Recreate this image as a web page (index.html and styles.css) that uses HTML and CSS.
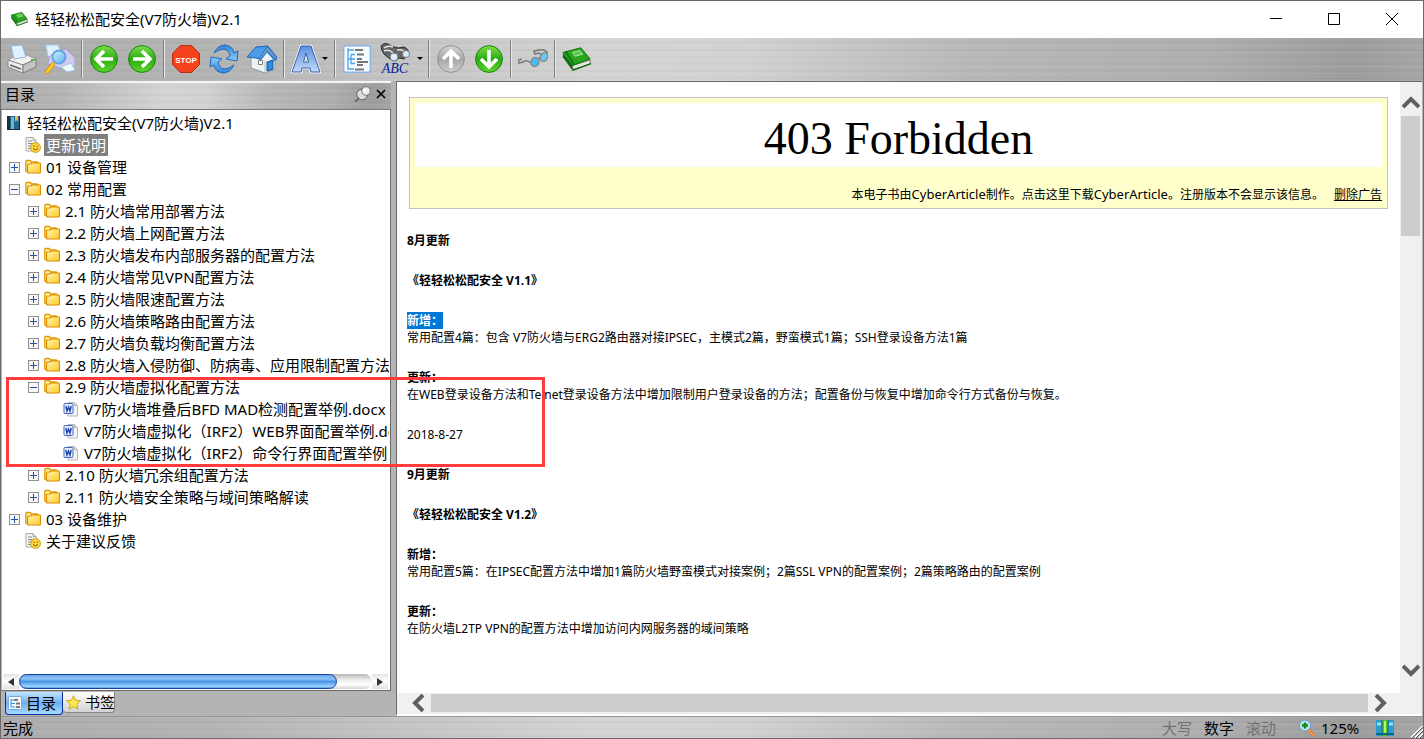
FILE: index.html
```html
<!DOCTYPE html>
<html lang="zh-CN">
<head>
    <meta charset="UTF-8">
    <meta name="viewport" content="width=device-width, initial-scale=1.0">
    <title>轻轻松松配安全(V7防火墙)V2.1</title>
    <link rel="stylesheet" href="styles.css">
</head>
<body>
    <!-- Shared icons -->
    <svg class="defs" aria-hidden="true">
        <defs>
            <linearGradient id="gGreen" x1="0" y1="0" x2="0" y2="1"><stop offset="0" stop-color="#7ddf4c"/><stop offset=".5" stop-color="#2bab12"/><stop offset="1" stop-color="#5fd52c"/></linearGradient>
            <linearGradient id="gGray" x1="0" y1="0" x2="0" y2="1"><stop offset="0" stop-color="#d6d6d6"/><stop offset=".5" stop-color="#a6a6a6"/><stop offset="1" stop-color="#cfcfcf"/></linearGradient>
            <linearGradient id="gBlue" x1="0" y1="0" x2="0" y2="1"><stop offset="0" stop-color="#2f86d8"/><stop offset="1" stop-color="#8ecbfa"/></linearGradient>
            <linearGradient id="gLens" x1="0" y1="0" x2="1" y2="1"><stop offset="0" stop-color="#d8f3ff"/><stop offset="1" stop-color="#4db3ee"/></linearGradient>
            <linearGradient id="gLetter" x1="0" y1="0" x2="0" y2="1"><stop offset="0" stop-color="#5c8fe0"/><stop offset="1" stop-color="#c3daf8"/></linearGradient>
            <linearGradient id="gFolder" x1="0" y1="0" x2="1" y2="1"><stop offset="0" stop-color="#fff6b0"/><stop offset="1" stop-color="#ffc928"/></linearGradient>
        </defs>
        <symbol id="book" viewBox="0 0 32 32">
            <path d="M1 10v4l10 14 3-2z" fill="#0b6b0b"/>
            <path d="M11 23l19-6v4l-18 7z" fill="#e8e8e8" stroke="#777" stroke-width="1"/>
            <path d="M11 28l20-7" stroke="#0b6b0b" stroke-width="1.5"/>
            <path d="M1 9L20 4l10 12-19 7z" fill="#26a51d" stroke="#0c720c" stroke-width="1"/>
            <path d="M4 8l9 14" stroke="#0c720c" stroke-width="1.5"/>
            <path d="M11 9l8-2 3 4-8 2z" fill="#59c64d" stroke="#b2ebaa" stroke-width="1"/>
        </symbol>
        <symbol id="folder" viewBox="0 0 16 16">
            <path d="M.8 12.5V2.5q0-1 1-1h3.5l1.2 1.5H12q1 0 1 1V5" fill="#fff3b4" stroke="#e09a00" stroke-width="1.3"/>
            <path d="M3 5h3l1-1h7.5q1 0 1 1v8q0 1-1 1h-11q-1 0-1-1V6z" fill="url(#gFolder)" stroke="#d98e00" stroke-width="1.2"/>
            <path d="M1 12l2 2" stroke="#d98e00"/>
        </symbol>
        <symbol id="note" viewBox="0 0 16 16">
            <path d="M1 .5h7l3 3V14H1z" fill="#f4f4f4" stroke="#aaa"/>
            <path d="M8 .5v3h3" fill="#ddd" stroke="#aaa"/>
            <path d="M3 4h4M3 6.5h5M3 9h3M3 11.5h3" stroke="#8d8d8d"/>
            <circle cx="10.5" cy="10.5" r="4.9" fill="#ffd840" stroke="#c39a20"/>
            <circle cx="9" cy="9.300" r=".7" fill="#7a5200"/><circle cx="12.2" cy="9.300" r=".7" fill="#7a5200"/>
            <path d="M8 11.5q2.500 2.800 5 0" fill="none" stroke="#7a5200"/>
        </symbol>
        <symbol id="word" viewBox="0 0 16 16">
            <path d="M5 1.500h6.500l3 3V15H5z" fill="#f4f4f4" stroke="#b8b8b8"/>
            <path d="M11.500 1.500v3h3" fill="#ddd" stroke="#b8b8b8"/>
            <rect x="1" y="2.500" width="9" height="10" rx="1" fill="#e8f0ff" stroke="#4368c0"/>
            <path d="M2.800 5l1.200 5 1.500-4 1.500 4L8.200 5" fill="none" stroke="#2144a8" stroke-width="1.400"/>
        </symbol>
        <symbol id="tree" viewBox="0 0 28 28">
            <rect x=".7" y=".7" width="26.600" height="26.600" rx="2" fill="#f6fbff" stroke="#87b3e6" stroke-width="1.400"/>
            <path d="M5 3v21h6M5 5h6M5 14h3M8 9.500h4M8 9.500v9h4M8 14h4" fill="none" stroke="#49a4e8" stroke-width="1.300"/>
            <path d="M12 5h8M14 9.500h7M14 14h5M14 17h11M14 20h6M12 24.500h9" stroke="#777" stroke-width="1.800"/>
        </symbol>
        <symbol id="outline" viewBox="0 0 14 14">
            <rect x=".5" y=".5" width="13" height="13" rx="1" fill="#f6fbff" stroke="#7aa6dc"/>
            <path d="M3 3v8h4M3 4h3M3 7.500h4" fill="none" stroke="#2f8fe0"/>
            <path d="M6 4h4M8 7.500h4M8 11h4" stroke="#777" stroke-width="2"/>
        </symbol>
    </svg>

    <div class="window">
        <header class="titlebar">
            <svg class="app-icon"><use href="#book"/></svg>
            <h1>轻轻松松配安全(V7防火墙)V2.1</h1>
            <div class="window-buttons">
                <button type="button" aria-label="最小化"><svg viewBox="0 0 12 12"><path d="M0 5.500h12"/></svg></button>
                <button type="button" aria-label="最大化"><svg viewBox="0 0 12 12"><path d="M.5.500h11v11H.5z"/></svg></button>
                <button type="button" aria-label="关闭"><svg viewBox="0 0 12 12"><path d="M0 0l12 12M12 0L0 12"/></svg></button>
            </div>
        </header>

        <nav class="toolbar metal">
            <button type="button" aria-label="打印">
                <svg viewBox="0 0 30 30">
                    <path d="M1 16l7-4 12-1 9 4-13 6z" fill="#f2f2f2" stroke="#999"/>
                    <path d="M4 2l11-1 4 12-12 2z" fill="#e0f1ff" stroke="#8fb8dc"/>
                    <path d="M1 16l15 5v8L1 23z" fill="#ededed" stroke="#8a8a8a"/>
                    <path d="M16 21l13-6v8l-13 6z" fill="#c4c4c4" stroke="#7d7d7d"/>
                    <path d="M3 21l11 4" stroke="#666" stroke-width="1.500"/>
                    <circle cx="25" cy="16" r="1.300" fill="#36c336"/>
                </svg>
            </button>
            <button type="button" aria-label="打印预览">
                <svg viewBox="0 0 30 30">
                    <path d="M1 1h12l4 9-14 3z" fill="#dff0ff" stroke="#a3cdec"/>
                    <path d="M12 7l9-2 9 9v8l-12 3-15-5 1-7z" fill="#cfcdf0" stroke="#9f9dd0"/>
                    <path d="M16 23l10-4 4 7-8 2z" fill="#f2faff" stroke="#9bc8ec"/>
                    <path d="M8 20l-6 8" stroke="#bf7b00" stroke-width="4" stroke-linecap="round"/>
                    <path d="M8 20l-6 8" stroke="#ffc61c" stroke-width="3" stroke-linecap="round"/>
                    <circle cx="14" cy="13" r="6.500" fill="url(#gLens)" stroke="#6ba2e4" stroke-width="2"/>
                </svg>
            </button>
            <span class="sep"></span>
            <button type="button" aria-label="后退">
                <svg viewBox="-1 -1 30 30"><circle cx="14" cy="14" r="13.400" fill="url(#gGreen)" stroke="#188609"/><path d="M14 6l-8 8 8 8M7 14h16" fill="none" stroke="#fff" stroke-width="3.600"/></svg>
            </button>
            <button type="button" aria-label="前进">
                <svg viewBox="-1 -1 30 30"><circle cx="14" cy="14" r="13.400" fill="url(#gGreen)" stroke="#188609"/><path d="M14 6l8 8-8 8M21 14H5" fill="none" stroke="#fff" stroke-width="3.600"/></svg>
            </button>
            <span class="sep"></span>
            <button type="button" aria-label="停止">
                <svg viewBox="-1 -1 30 30"><path d="M8.500.5h11l8 8v11l-8 8h-11l-8-8v-11z" fill="#f4421c" stroke="#b92c10"/><text x="14" y="18" class="stop-text">STOP</text></svg>
            </button>
            <button type="button" aria-label="刷新">
                <svg viewBox="0 0 30 30">
                    <path id="arc" d="M5 9Q9 1 16 1q8 1 9 8l4-2-1 10-11-2 4-3q-1-6-6-7-5 0-10 4z" fill="url(#gBlue)" stroke="#1b67b7"/>
                    <use href="#arc" transform="rotate(180 15 15)"/>
                </svg>
            </button>
            <button type="button" aria-label="主页">
                <svg viewBox="0 0 30 30">
                    <path d="M4 14l16-9 8 10v10l-10 4-14-5z" fill="#eef1f6" stroke="#8b95a5"/>
                    <path d="M18 17v12" stroke="#b5bdc9"/>
                    <path d="M0 13L9 3l12-1-9 13-3-1z" fill="#4b9de9" stroke="#1d63ae"/>
                    <path d="M20 2l10 12-2 2-8-9-7 9" fill="none" stroke="#2f7fcd" stroke-width="2"/>
                    <path d="M20 18l6-2v9l-6 2z" fill="#2e8ce0" stroke="#145596"/>
                    <path d="M11.500 16.500h4v4h-4z" fill="#fff" stroke="#777"/>
                </svg>
            </button>
            <span class="sep"></span>
            <button type="button" class="with-caret" aria-label="字体">
                <svg viewBox="0 0 30 30"><path d="M1 28L10 2h10l9 26h-9l-1-4h-8l-1 4zM12.500 18h5L15 9z" fill="#fff" stroke="#fff" stroke-width="2.500" fill-rule="evenodd"/><path d="M1 28L10 2h10l9 26h-9l-1-4h-8l-1 4zM12.500 18h5L15 9z" fill="url(#gLetter)" stroke="#335fac" fill-rule="evenodd"/></svg>
                <span class="caret"></span>
            </button>
            <span class="sep"></span>
            <button type="button" aria-label="同步目录"><svg viewBox="-1 -1 30 30"><use href="#tree" width="28" height="28"/></svg></button>
            <button type="button" class="with-caret wide" aria-label="查找">
                <svg viewBox="0 0 32 32">
                    <path d="M1 3q3-4 7-2l3 2 7 2 6-1q4 1 5 7l-5 5-5-1-4 3-5-2-6-5q-3-4-3-8z" fill="#666" stroke="#2a2a2a"/>
                    <path d="M4 5q4-3 9-1M4 8q5-2 9 2M17 7q6-1 9 3" fill="none" stroke="#e6e6e6" stroke-width="1.500"/>
                    <circle cx="14" cy="14" r="4" fill="#d5efff" stroke="#777"/><circle cx="26" cy="11" r="3.500" fill="#d5efff" stroke="#777"/>
                    <text x="15" y="30" class="abc-text">ABC</text>
                </svg>
                <span class="caret"></span>
            </button>
            <span class="sep"></span>
            <button type="button" aria-label="上一篇">
                <svg viewBox="-1 -1 30 30"><circle cx="14" cy="14" r="13.400" fill="url(#gGray)" stroke="#929292"/><path d="M6 14l8-8 8 8M14 7v16" fill="none" stroke="#fff" stroke-width="3.600"/></svg>
            </button>
            <button type="button" aria-label="下一篇">
                <svg viewBox="-1 -1 30 30"><circle cx="14" cy="14" r="13.400" fill="url(#gGreen)" stroke="#188609"/><path d="M6 14l8 8 8-8M14 21V5" fill="none" stroke="#fff" stroke-width="3.600"/></svg>
            </button>
            <span class="sep"></span>
            <button type="button" aria-label="阅读模式">
                <svg viewBox="0 0 30 30"><path d="M13 19q-4-4-8-1l-4 1-1-3 4-1M29 11V8q-3-3-8-2l-5 1 1 3 4-1 3 2M19 17q2-4 4-3" fill="none" stroke="#777" stroke-width="1.600"/><ellipse cx="17" cy="18" rx="4" ry="4.500" fill="#48bdf5" stroke="#888" stroke-width="1.500" transform="rotate(25 17 18)"/><ellipse cx="26" cy="13" rx="3.500" ry="4.500" fill="#63cbf8" stroke="#888" stroke-width="1.500" transform="rotate(25 26 13)"/></svg>
            </button>
            <span class="sep"></span>
            <button type="button" aria-label="电子书"><svg><use href="#book"/></svg></button>
        </nav>

        <div class="main">
            <aside class="sidebar">
                <div class="panel-head metal">
                    <h2>目录</h2>
                    <button type="button" aria-label="固定"><svg viewBox="0 0 16 16"><path d="M0 16l5-5" stroke="#555" stroke-width="1.500"/><ellipse cx="7" cy="8.500" rx="5" ry="5.500" fill="#ddd" stroke="#666" transform="rotate(-40 7 8.500)"/><circle cx="11" cy="5" r="4.300" fill="#eee" stroke="#777"/><circle cx="10" cy="4" r="1.500" fill="#fff"/></svg></button>
                    <button type="button" aria-label="关闭面板"><svg viewBox="0 0 16 16"><path d="M4 4l8 8M12 4l-8 8" stroke="#000" stroke-width="1.700"/></svg></button>
                </div>
                <div class="tree-box">
                    <div class="tree">
                        <div class="row root">
                            <svg viewBox="0 0 16 16"><path d="M1 1h13v14H1z" fill="#1d3038"/><path d="M4 1h9v13H4z" fill="#23688c"/><path d="M5 2h3v12H5z" fill="#6eb6cf"/><path d="M9 1h3v6l-1.500-2L9 7z" fill="#efb94a"/></svg>
                            <a href="#">轻轻松松配安全(V7防火墙)V2.1</a>
                        </div>
                        <ul>
                            <li><div class="row leaf"><svg><use href="#note"/></svg><a href="#" class="selected">更新说明</a></div></li>
                            <li><div class="row"><button type="button" class="toggle plus" aria-label="展开"></button><svg><use href="#folder"/></svg><a href="#">01 设备管理</a></div></li>
                            <li><div class="row"><button type="button" class="toggle" aria-label="收起"></button><svg><use href="#folder"/></svg><a href="#">02 常用配置</a></div>
                                <ul>
                                    <li><div class="row"><button type="button" class="toggle plus" aria-label="展开"></button><svg><use href="#folder"/></svg><a href="#">2.1 防火墙常用部署方法</a></div></li>
                                    <li><div class="row"><button type="button" class="toggle plus" aria-label="展开"></button><svg><use href="#folder"/></svg><a href="#">2.2 防火墙上网配置方法</a></div></li>
                                    <li><div class="row"><button type="button" class="toggle plus" aria-label="展开"></button><svg><use href="#folder"/></svg><a href="#">2.3 防火墙发布内部服务器的配置方法</a></div></li>
                                    <li><div class="row"><button type="button" class="toggle plus" aria-label="展开"></button><svg><use href="#folder"/></svg><a href="#">2.4 防火墙常见VPN配置方法</a></div></li>
                                    <li><div class="row"><button type="button" class="toggle plus" aria-label="展开"></button><svg><use href="#folder"/></svg><a href="#">2.5 防火墙限速配置方法</a></div></li>
                                    <li><div class="row"><button type="button" class="toggle plus" aria-label="展开"></button><svg><use href="#folder"/></svg><a href="#">2.6 防火墙策略路由配置方法</a></div></li>
                                    <li><div class="row"><button type="button" class="toggle plus" aria-label="展开"></button><svg><use href="#folder"/></svg><a href="#">2.7 防火墙负载均衡配置方法</a></div></li>
                                    <li><div class="row"><button type="button" class="toggle plus" aria-label="展开"></button><svg><use href="#folder"/></svg><a href="#">2.8 防火墙入侵防御、防病毒、应用限制配置方法</a></div></li>
                                    <li><div class="row"><button type="button" class="toggle" aria-label="收起"></button><svg><use href="#folder"/></svg><a href="#">2.9 防火墙虚拟化配置方法</a></div>
                                        <ul>
                                            <li><div class="row leaf"><svg><use href="#word"/></svg><a href="#">V7防火墙堆叠后BFD MAD检测配置举例.docx</a></div></li>
                                            <li><div class="row leaf"><svg><use href="#word"/></svg><a href="#">V7防火墙虚拟化（IRF2）WEB界面配置举例.docx</a></div></li>
                                            <li><div class="row leaf"><svg><use href="#word"/></svg><a href="#">V7防火墙虚拟化（IRF2）命令行界面配置举例</a></div></li>
                                        </ul>
                                    </li>
                                    <li><div class="row"><button type="button" class="toggle plus" aria-label="展开"></button><svg><use href="#folder"/></svg><a href="#">2.10 防火墙冗余组配置方法</a></div></li>
                                    <li><div class="row"><button type="button" class="toggle plus" aria-label="展开"></button><svg><use href="#folder"/></svg><a href="#">2.11 防火墙安全策略与域间策略解读</a></div></li>
                                </ul>
                            </li>
                            <li><div class="row"><button type="button" class="toggle plus" aria-label="展开"></button><svg><use href="#folder"/></svg><a href="#">03 设备维护</a></div></li>
                            <li><div class="row leaf"><svg><use href="#note"/></svg><a href="#">关于建议反馈</a></div></li>
                        </ul>
                    </div>
                    <div class="tree-scroll">
                        <button type="button" aria-label="向左"><svg viewBox="0 0 6 8"><path d="M6 0v8L0 4z"/></svg></button>
                        <div class="track"><div class="thumb"></div></div>
                        <button type="button" aria-label="向右"><svg viewBox="0 0 6 8"><path d="M0 0v8l6-4z"/></svg></button>
                    </div>
                </div>
                <div class="tabs">
                    <button type="button" class="tab active"><svg><use href="#outline"/></svg>目录</button>
                    <button type="button" class="tab"><svg viewBox="0 0 16 16"><path d="M8 .8l2.200 4.900 5.300.5-4 3.500 1.200 5.300L8 12.300 3.300 15l1.200-5.300-4-3.500 5.300-.5z" fill="#ffe84c" stroke="#c9a21a"/></svg><span>书签</span></button>
                </div>
            </aside>

            <section class="viewer">
                <div class="view-row">
                    <article class="page">
                        <div class="ad">
                            <div class="ad-frame">403 Forbidden</div>
                            <p>本电子书由<span>CyberArticle</span>制作。点击这里下载<span>CyberArticle</span>。注册版本不会显示该信息。<a href="#">删除广告</a></p>
                        </div>
                        <p><b>8月更新</b></p>
                        <p><b>《轻轻松松配安全 V1.1》</b></p>
                        <p><b><mark>新增：</mark></b><br>常用配置4篇：包含 V7防火墙与ERG2路由器对接IPSEC，主模式2篇，野蛮模式1篇；SSH登录设备方法1篇</p>
                        <p><b>更新：</b><br>在WEB登录设备方法和Telnet登录设备方法中增加限制用户登录设备的方法；配置备份与恢复中增加命令行方式备份与恢复。</p>
                        <p>2018-8-27</p>
                        <p><b>9月更新</b></p>
                        <p><b>《轻轻松松配安全 V1.2》</b></p>
                        <p><b>新增：</b><br>常用配置5篇：在IPSEC配置方法中增加1篇防火墙野蛮模式对接案例；2篇SSL VPN的配置案例；2篇策略路由的配置案例</p>
                        <p><b>更新：</b><br>在防火墙L2TP VPN的配置方法中增加访问内网服务器的域间策略</p>
                    </article>
                    <div class="vscroll">
                        <button type="button" aria-label="向上"><svg viewBox="0 0 18 14"><path d="M1 11l8-8 8 8"/></svg></button>
                        <div class="track"><div class="thumb"></div></div>
                        <button type="button" aria-label="向下"><svg viewBox="0 0 18 14"><path d="M1 3l8 8 8-8"/></svg></button>
                    </div>
                </div>
                <div class="hscroll">
                    <button type="button" aria-label="向左"><svg viewBox="0 0 14 18"><path d="M11 1L3 9l8 8"/></svg></button>
                    <div class="thumb"></div>
                    <button type="button" aria-label="向右"><svg viewBox="0 0 14 18"><path d="M3 1l8 8-8 8"/></svg></button>
                </div>
            </section>
        </div>

        <footer class="statusbar metal">
            <span class="message">完成</span>
            <span class="key off">大写</span>
            <span class="key">数字</span>
            <span class="key off">滚动</span>
            <button type="button" class="zoom"><svg viewBox="0 0 18 18"><path d="M10 10l6 7" stroke="#e8742a" stroke-width="3"/><path d="M10 10l6 7" stroke="#ffc08a"/><circle cx="7" cy="6.500" r="5.500" fill="#b9e5f8" stroke="#5f9cbc"/><path d="M7 3.500v6M4 6.500h6" stroke="#118a11" stroke-width="2.500"/></svg>125%</button>
            <button type="button" class="books" aria-label="书架"><svg viewBox="0 0 18 18"><path d="M0 1h6v16H0zM12 1h6v16h-6z" fill="#2b9bd2"/><path d="M6 1h6v16H6z" fill="#52c41e"/><path d="M1 5h4M13 5h4" stroke="#96e4f5" stroke-width="3"/><path d="M9 2v14" stroke="#b9f26b" stroke-width="2"/><path d="M6 1v16M12 1v16" stroke="#116488"/><path d="M0 15h18" stroke="#116488" stroke-width="2"/></svg></button>
            <svg class="grip" viewBox="0 0 12 12"><path d="M0 12L12 0M4 12l8-8M8 12l4-4" stroke="#fff" stroke-width="2"/><path d="M1 12L12 1M5 12l7-7M9 12l3-3" stroke="#555"/></svg>
        </footer>

        <div class="callout"></div>
    </div>
</body>
</html>
```
FILE: styles.css
```css
* { box-sizing: border-box; }
body { margin: 0; font-family: "Noto Sans", "Noto Sans CJK SC", sans-serif; font-size: 15px; color: #000; }
h1, h2, p, ul { margin: 0; padding: 0; font-weight: normal; }
ul { list-style: none; }
a { color: inherit; text-decoration: none; }
button { padding: 0; border: 0; background: none; font: inherit; color: inherit; cursor: pointer; }
svg { display: block; flex: none; }
.defs { position: absolute; width: 0; height: 0; }

.window { position: relative; display: flex; flex-direction: column; height: 100vh; border: 1px solid #696969; background: #b4b4b4; overflow: hidden; }

/* brushed metal bars */
.metal {
    background:
        repeating-linear-gradient(180deg, rgba(255,255,255,.07) 0, rgba(255,255,255,.07) 1px, transparent 1px, transparent 4px, rgba(0,0,0,.02) 4px, rgba(0,0,0,.02) 6px, transparent 6px, transparent 7px),
        linear-gradient(95deg, #adadad 0%, #b4b4b4 15%, #c4c4c4 28%, #d4d4d4 42%, #d2d2d2 52%, #b8b8b8 68%, #aeaeae 85%, #9d9d9d 95%, #a6a6a6 100%);
}

.titlebar { display: flex; align-items: center; height: 37px; padding: 0 2px 2px 9px; background: #fff; }
.titlebar h1 { flex: 1; margin-left: 6px; font-size: 15px; line-height: 22px; }
.app-icon { width: 19px; height: 18px; }
.window-buttons { display: flex; }
.window-buttons button { display: flex; align-items: center; justify-content: center; width: 58px; height: 34px; }
.window-buttons svg { width: 12px; height: 12px; fill: none; stroke: #000; }

.toolbar { display: flex; align-items: center; height: 43px; padding: 0 0 2px 2px; }
.toolbar button { display: flex; align-items: center; justify-content: center; width: 38px; height: 38px; }
.toolbar button svg { width: 30px; height: 30px; }
.toolbar .with-caret { width: 45px; gap: 1px; }
.toolbar .wide { width: 50px; gap: 5px; }
.toolbar .wide svg { width: 32px; height: 32px; }
.caret { border: 3px solid transparent; border-top-color: #000; border-bottom: 0; }
.sep { width: 2px; height: 38px; margin: 0 2px; background: #808080; border-right: 1px solid #e6e6e6; }
.stop-text { font: bold 8px "Liberation Sans", sans-serif; fill: #fff; text-anchor: middle; }
.abc-text { font: italic 14px "Liberation Serif", serif; fill: #001f9c; text-anchor: middle; }

.main { flex: 1; display: flex; gap: 5px; min-height: 0; }
.sidebar { display: flex; flex-direction: column; width: 390px; }
.panel-head { display: flex; align-items: center; height: 29px; padding: 0 0 4px 4px; border-top: 2px solid #f4f4f4; border-bottom: 1px solid #7b7b7b; background-size: auto, 100% 100%; }
.panel-head h2 { flex: 1; font-size: 15px; line-height: 22px; }
.panel-head button { width: 18px; }
.panel-head svg { width: 16px; height: 16px; }

.tree-box { flex: 1; display: flex; flex-direction: column; min-height: 0; margin-left: 1px; padding: 2px 1px 1px 0; border-right: 1px solid #696969; border-bottom: 1px solid #696969; background: #fff; }
.tree { flex: 1; overflow: hidden; }
.tree ul ul { padding-left: 19px; }
.row { display: flex; align-items: center; height: 22px; padding-left: 7px; white-space: nowrap; }
.row svg { width: 16px; height: 16px; margin-right: 3px; }
.row a { padding: 0 2px; line-height: 22px; }
.row.root { padding-left: 4px; }
.row.leaf { padding-left: 23px; }
.row .selected { background: #808080; color: #fff; }
.toggle { flex: none; width: 11px; height: 11px; margin-right: 5px; border: 1px solid #919191;
    background: linear-gradient(#2b4fa8, #2b4fa8) center / 7px 1px no-repeat, #f7f7f7; }
.toggle.plus { background: linear-gradient(#2b4fa8, #2b4fa8) center / 7px 1px no-repeat, linear-gradient(#2b4fa8, #2b4fa8) center / 1px 7px no-repeat, #f7f7f7; }

.tree-scroll { display: flex; height: 15px; padding: 0 1px; }
.tree-scroll button { display: flex; align-items: center; justify-content: center; width: 16px; background: linear-gradient(#e4e4e4, #fff 50%, #e0e0e0); }
.tree-scroll button svg { width: 6px; height: 8px; fill: #333; }
.tree-scroll .track { flex: 1; border-radius: 8px; background: linear-gradient(#b8b8b8, #eee 40%, #fff 70%, #d5d5d5); }
.tree-scroll .thumb { width: 90%; height: 15px; border: 1px solid #1741a0; border-radius: 8px; background: linear-gradient(#6ea9ec, #8fc2f5 30%, #4a94e8 50%, #9ed7ff 90%, #4b8fdc); }

.tabs { display: flex; align-items: flex-start; height: 25px; padding: 1px 0 0 4px; }
.tab { display: flex; align-items: center; width: 52px; height: 21px; padding-left: 3px; gap: 4px; border-radius: 0 0 4px 4px; background: linear-gradient(#fff, #d2d2d2); border-right: 1px solid #888; border-bottom: 1px solid #888; line-height: 20px; overflow: hidden; white-space: nowrap; }
.tab.active { width: 58px; height: 23px; padding-left: 2px; border: 1px solid #0b2f9f; border-top: 0; background: linear-gradient(#c4e4ff, #6fb0f3 50%, #a5dcff); }
.tab svg { width: 15px; height: 15px; }
.tab.active svg { width: 14px; height: 14px; }

.viewer { flex: 1; display: flex; flex-direction: column; min-width: 0; margin-right: 1px; border-top: 1px solid #696969; border-left: 1px solid #696969; border-bottom: 2px solid #fff; background: #fff; }
.view-row { flex: 1; display: flex; min-height: 0; }
.page { flex: 1; min-width: 0; padding: 15px 12px 0 10px; overflow: hidden; font-size: 12px; line-height: 17px; }
.page p { margin-bottom: 23px; }
.page mark { display: inline-block; background: #0078d7; color: #fff; }
.page .ad { height: 112px; margin: 0 0 23px 2px; padding: 5px; border: 1px solid #c3c3c3; background: #ffc; font-family: "Noto Sans CJK TC", sans-serif; }
.ad-frame { height: 64px; background: #fff; font: 46px/72px "Liberation Serif", serif; text-align: center; }
.page .ad p { margin-top: 18px; text-align: right; }
.ad p { font-family: "Noto Sans CJK TC", sans-serif; }
.ad span { font-family: "Noto Sans", sans-serif; font-size: 13px; }
.ad a { margin-left: 10px; text-decoration: underline; }

.vscroll, .hscroll { display: flex; background: #f0f0f0; }
.vscroll { flex-direction: column; width: 22px; padding: 10px 2px 10px 1px; }
.vscroll .track { flex: 1; }
.vscroll .thumb { height: 120px; background: #cdcdcd; }
.vscroll button, .hscroll button { display: flex; align-items: center; justify-content: center; }
.vscroll button { height: 24px; padding-bottom: 2px; }
.hscroll { height: 21px; padding: 1px 30px 2px 10px; }
.hscroll button { width: 24px; }
.hscroll .thumb { flex: 1; background: #cdcdcd; }
.vscroll svg { width: 18px; height: 14px; }
.hscroll svg { width: 14px; height: 18px; }
.vscroll path, .hscroll path { fill: none; stroke: #606060; stroke-width: 4; }

.statusbar { display: flex; align-items: center; height: 22px; padding-left: 2px; border-top: 1px solid #959595; line-height: 20px; }
.message { flex: 1; }
.key { width: 42px; }
.key.off { color: #707070; }
.zoom { display: flex; align-items: center; gap: 5px; width: 66px; margin-left: 10px; }
.zoom svg { width: 18px; height: 18px; }
.books { margin: 0 17px 0 12px; }
.books svg { width: 18px; height: 18px; }
.grip { align-self: flex-end; width: 12px; height: 12px; }

/* red marker drawn over both panes */
.callout { position: absolute; left: 5px; top: 376px; width: 539px; height: 90px; border: 3px solid #ff3b3b; pointer-events: none; }
```
